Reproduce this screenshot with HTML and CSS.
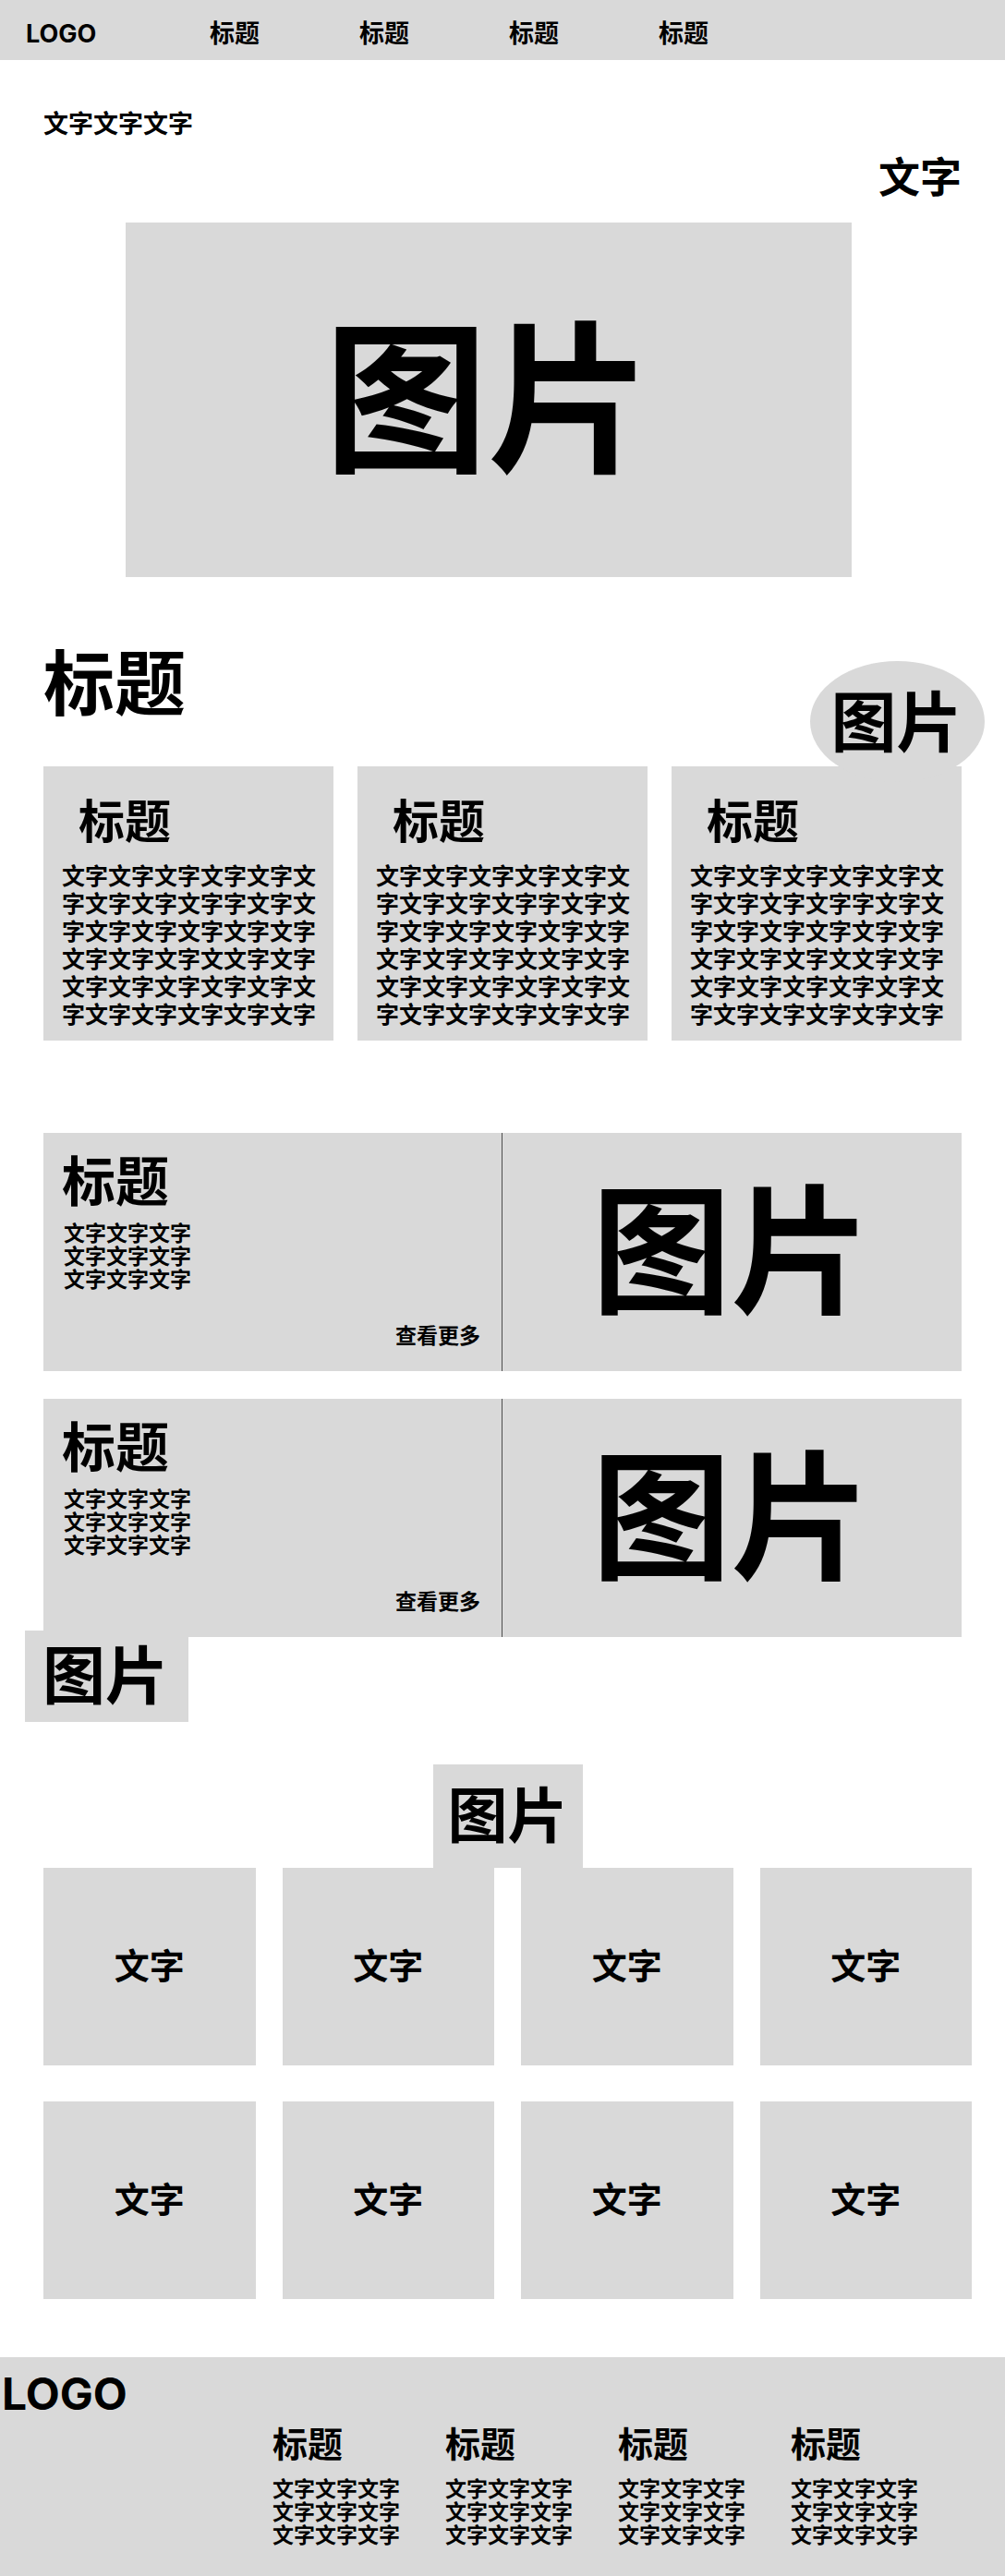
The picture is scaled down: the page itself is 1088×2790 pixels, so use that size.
FILE: index.html
```html
<!DOCTYPE html>
<html lang="zh-CN">
<head>
<meta charset="utf-8">
<meta name="viewport" content="width=device-width, initial-scale=1">
<title>LOGO</title>
<link rel="stylesheet" href="styles.css">
</head>
<body>
<header class="site-header">
  <a class="logo" href="#">LOGO</a>
  <nav class="site-nav">
    <a href="#">标题</a>
    <a href="#">标题</a>
    <a href="#">标题</a>
    <a href="#">标题</a>
  </nav>
</header>
<main>
  <section class="hero">
    <p class="hero-lead">文字文字文字</p>
    <p class="hero-note">文字</p>
    <div class="hero-image">图片</div>
  </section>

  <section class="features">
    <h1 class="features-title">标题</h1>
    <div class="badge-ellipse">图片</div>
    <div class="feature-grid">
      <article class="feature">
        <h2>标题</h2>
        <p>
          文字文字文字文字文字文<br>
          字文字文字文字字文字文<br>
          字文字文字文字文字文字<br>
          文字文字文字文文字文字<br>
          文字文字文字文字文字文<br>
          字文字文字文字文字文字
        </p>
      </article>
      <article class="feature">
        <h2>标题</h2>
        <p>
          文字文字文字文字文字文<br>
          字文字文字文字字文字文<br>
          字文字文字文字文字文字<br>
          文字文字文字文文字文字<br>
          文字文字文字文字文字文<br>
          字文字文字文字文字文字
        </p>
      </article>
      <article class="feature">
        <h2>标题</h2>
        <p>
          文字文字文字文字文字文<br>
          字文字文字文字字文字文<br>
          字文字文字文字文字文字<br>
          文字文字文字文文字文字<br>
          文字文字文字文字文字文<br>
          字文字文字文字文字文字
        </p>
      </article>
    </div>
  </section>

  <section class="stories">
    <article class="story">
      <div class="story-body">
        <h2>标题</h2>
        <p class="text-lines">文字文字文字<br>文字文字文字<br>文字文字文字</p>
        <a class="more" href="#">查看更多</a>
      </div>
      <div class="story-image">图片</div>
    </article>
    <article class="story">
      <div class="story-body">
        <h2>标题</h2>
        <p class="text-lines">文字文字文字<br>文字文字文字<br>文字文字文字</p>
        <a class="more" href="#">查看更多</a>
      </div>
      <div class="story-image">图片</div>
    </article>
    <div class="badge-corner">图片</div>
  </section>

  <section class="gallery">
    <div class="gallery-image">图片</div>
    <div class="tiles">
      <div class="tile">文字</div>
      <div class="tile">文字</div>
      <div class="tile">文字</div>
      <div class="tile">文字</div>
      <div class="tile">文字</div>
      <div class="tile">文字</div>
      <div class="tile">文字</div>
      <div class="tile">文字</div>
    </div>
  </section>
</main>
<footer class="site-footer">
  <a class="footer-logo" href="#">LOGO</a>
  <div class="footer-columns">
    <section>
      <h3>标题</h3>
      <p class="text-lines">文字文字文字<br>文字文字文字<br>文字文字文字</p>
    </section>
    <section>
      <h3>标题</h3>
      <p class="text-lines">文字文字文字<br>文字文字文字<br>文字文字文字</p>
    </section>
    <section>
      <h3>标题</h3>
      <p class="text-lines">文字文字文字<br>文字文字文字<br>文字文字文字</p>
    </section>
    <section>
      <h3>标题</h3>
      <p class="text-lines">文字文字文字<br>文字文字文字<br>文字文字文字</p>
    </section>
  </div>
</footer>
</body>
</html>
```
FILE: styles.css
```css
:root {
  --panel: #d9d9d9;
  --rule: #4d4d4d;
}

* {
  box-sizing: border-box;
}

body {
  margin: 0;
  background: #fff;
  color: #000;
  font-family: Inter, "Noto Sans CJK SC", sans-serif;
  font-weight: 700;
}

h1, h2, h3, p {
  margin: 0;
  font-weight: inherit;
}

a {
  color: inherit;
  text-decoration: none;
}

/* Header */
.site-header {
  display: flex;
  padding: 21px 28px 12px;
  background: var(--panel);
  font-size: 27px;
  line-height: 32px;
}

.logo {
  width: 199px;
}

.site-nav {
  display: flex;
  gap: 108px;
}

/* Hero */
.hero {
  padding: 54px 47px 0;
}

.hero-lead {
  font-size: 27px;
  line-height: 32px;
}

.hero-note {
  margin: 15px 0 21px;
  font-size: 45px;
  line-height: 54px;
  text-align: right;
}

.hero-image {
  display: flex;
  align-items: center;
  justify-content: center;
  min-height: 384px;
  margin: 0 119px 0 89px;
  padding: 2px 2px 0 0;
  background: var(--panel);
  font-size: 177px;
  line-height: 214px;
}

/* Feature cards */
.features {
  position: relative;
  padding: 70px 47px 0;
}

.features-title {
  margin-bottom: 43px;
  font-size: 77px;
  line-height: 92px;
}

.badge-ellipse {
  position: absolute;
  top: 91px;
  right: 22px;
  display: flex;
  align-items: center;
  justify-content: center;
  width: 189px;
  height: 131px;
  padding-right: 2px;
  border-radius: 50%;
  background: var(--panel);
  font-size: 71px;
  line-height: 86px;
}

.feature-grid {
  display: grid;
  grid-template-columns: repeat(3, 1fr);
  gap: 26px;
}

.feature {
  padding: 30px 18px 13px 20px;
  background: var(--panel);
}

.feature h2 {
  margin-bottom: 14px;
  padding-left: 18px;
  font-size: 50px;
  line-height: 60px;
}

.feature p {
  font-size: 25px;
  line-height: 30px;
}

/* Story rows */
.stories {
  position: relative;
  display: grid;
  gap: 30px;
  padding: 100px 47px 0;
}

.story {
  display: grid;
  grid-template-columns: 1fr 1fr;
  min-height: 258px;
  background: var(--panel);
}

.story-body {
  display: flex;
  flex-direction: column;
  padding: 18px 23px 24px 20px;
  border-right: 1px solid var(--rule);
}

.story-body h2 {
  margin-bottom: 9px;
  font-size: 58px;
  line-height: 70px;
}

.story-body .text-lines {
  padding-left: 2px;
}

.text-lines {
  font-size: 23px;
  line-height: 25px;
}

.more {
  align-self: flex-end;
  margin-top: auto;
  font-size: 23px;
  line-height: 28px;
}

.story-image {
  display: flex;
  align-items: center;
  justify-content: center;
  padding-right: 2px;
  font-size: 151px;
  line-height: 182px;
}

.badge-corner {
  position: absolute;
  bottom: -92px;
  left: 27px;
  display: flex;
  align-items: center;
  justify-content: center;
  width: 177px;
  height: 99px;
  padding: 0 3px 2px 0;
  background: var(--panel);
  font-size: 68px;
  line-height: 80px;
}

/* Gallery */
.gallery {
  padding: 138px 36px 63px 47px;
}

.gallery-image {
  width: 162px;
  height: 112px;
  margin: 0 auto;
  padding-top: 16px;
  background: var(--panel);
  font-size: 65px;
  line-height: 80px;
  text-align: center;
}

.tiles {
  display: grid;
  grid-template-columns: repeat(4, 1fr);
  gap: 39px 29px;
}

.tile {
  display: flex;
  align-items: center;
  justify-content: center;
  min-height: 214px;
  padding-bottom: 3px;
  background: var(--panel);
  font-size: 38px;
  line-height: 46px;
}

/* Footer */
.site-footer {
  padding: 11px 0 31px;
  background: var(--panel);
}

.footer-logo {
  display: block;
  padding-left: 2px;
  font-size: 48px;
  line-height: 58px;
}

.footer-columns {
  display: flex;
  gap: 49px;
  padding: 2px 0 0 295px;
}

.footer-columns h3 {
  margin-bottom: 14px;
  font-size: 38px;
  line-height: 46px;
}
```
